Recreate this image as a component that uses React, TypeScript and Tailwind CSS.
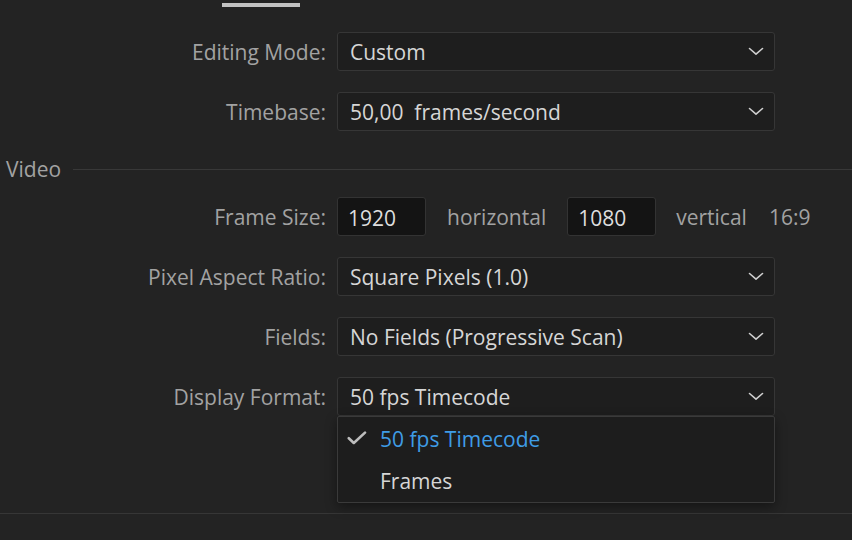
import React from "react";

const Chevron = () => (
  <svg width="16" height="9" viewBox="0 0 16 9" fill="none" className="shrink-0">
    <path d="M1.5 1.5 L8 7.2 L14.5 1.5" stroke="#cfcfcf" strokeWidth="1.6" strokeLinecap="round" strokeLinejoin="round" />
  </svg>
);

const Check = () => (
  <svg width="20" height="14" viewBox="0 0 20 14" fill="none">
    <path d="M1.8 7.2 L6.8 12 L18 1.6" stroke="#bdbdbd" strokeWidth="2.6" strokeLinecap="round" strokeLinejoin="round" />
  </svg>
);

const Label = ({ children }: { children: React.ReactNode }) => (
  <div className="w-[326px] shrink-0 pt-[2px] text-right text-[#a2a2a2]">{children}</div>
);

const Select = ({ value, children }: { value: string; children?: React.ReactNode }) => (
  <div className="relative ml-[11px] w-[438px]">
    <div className="flex h-[39px] items-center justify-between rounded-[3px] border border-[#363636] bg-[#1e1e1e] pl-[12px] pr-[10px] text-[#d6d6d6]">
      <span className="whitespace-pre pt-[2px]">{value}</span>
      <Chevron />
    </div>
    {children}
  </div>
);

const Row = ({ label, className, children }: { label: string; className?: string; children: React.ReactNode }) => (
  <div className={"flex items-center " + (className ?? "")}>
    <Label>{label}</Label>
    {children}
  </div>
);

const NumInput = ({ value, className }: { value: string; className?: string }) => (
  <div className={"flex h-[39px] w-[89px] items-center rounded-[3px] border border-[#333333] bg-[#141414] pl-[10px] pt-[3px] text-[#dedede] " + (className ?? "")}>
    {value}
  </div>
);

export default function App() {
  return (
    <div
      className="flex h-[540px] w-[852px] flex-col overflow-hidden bg-[#232323] pt-[3px] text-[21px] leading-none"
      style={{ fontFamily: '"Open Sans", "Noto Sans", sans-serif' }}
    >
      <div className="ml-[222px] h-[4px] w-[78px] bg-[#c2c2c2]" />

      <Row label="Editing Mode:" className="mt-[25px]">
        <Select value="Custom" />
      </Row>
      <Row label="Timebase:" className="mt-[21px]">
        <Select value="50,00  frames/second" />
      </Row>

      <div className="mt-[26px] flex h-[24px] items-center">
        <span className="ml-[6px] text-[#a2a2a2]">Video</span>
        <div className="ml-[12px] h-px flex-1 bg-[#383838]" />
      </div>

      <Row label="Frame Size:" className="mt-[16px]">
        <NumInput value="1920" className="ml-[11px]" />
        <span className="ml-[21px] pt-[2px] text-[#a2a2a2]">horizontal</span>
        <NumInput value="1080" className="ml-[21px]" />
        <span className="ml-[20px] pt-[2px] text-[#a2a2a2]">vertical</span>
        <span className="ml-[22px] pt-[2px] text-[#a2a2a2]">16:9</span>
      </Row>

      <Row label="Pixel Aspect Ratio:" className="mt-[21px]">
        <Select value="Square Pixels (1.0)" />
      </Row>
      <Row label="Fields:" className="mt-[21px]">
        <Select value="No Fields (Progressive Scan)" />
      </Row>
      <Row label="Display Format:" className="relative z-10 mt-[21px]">
        <Select value="50 fps Timecode">
          <div className="absolute left-0 top-full flex h-[87px] w-full flex-col rounded-[2px] border border-[#3a3a3a] bg-[#1d1d1d] shadow-[0_4px_12px_rgba(0,0,0,0.4)]">
            <div className="flex h-[42px] items-center pt-[1px]">
              <div className="ml-[9px] w-[33px]">
                <Check />
              </div>
              <span className="pt-[2px] text-[#3f9ce6]">50 fps Timecode</span>
            </div>
            <div className="flex h-[44px] items-center pt-[3px]">
              <span className="ml-[42px] text-[#d6d6d6]">Frames</span>
            </div>
          </div>
        </Select>
      </Row>

      <div className="mt-[97px] h-px w-full bg-[#363636]" />
    </div>
  );
}
